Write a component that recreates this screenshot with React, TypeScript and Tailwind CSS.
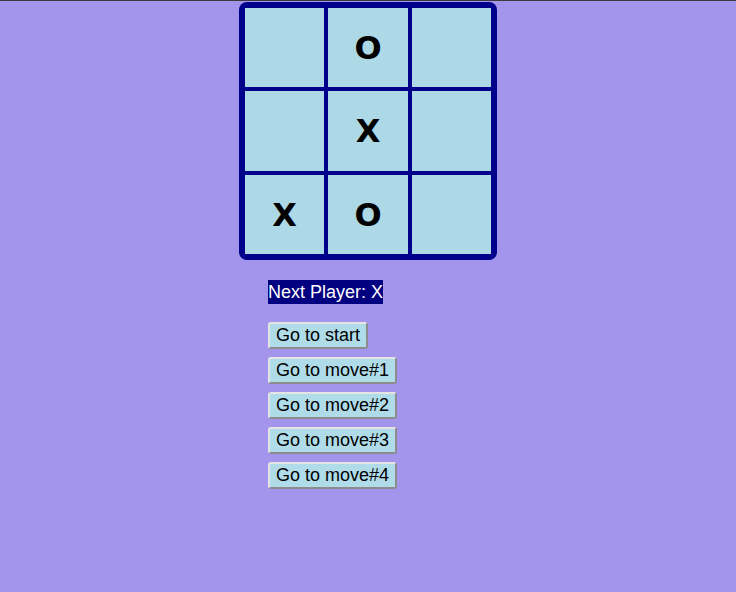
import React from "react";

const cells = ["", "O", "", "", "X", "", "X", "O", ""];
const moves = ["Go to start", "Go to move#1", "Go to move#2", "Go to move#3", "Go to move#4"];

export default function App() {
  return (
    <div
      className="min-h-[592px] w-full bg-[#a395eb] border-t border-[#3a3a3a]"
      style={{ fontFamily: '"Liberation Sans", Arial, sans-serif' }}
    >
      <div className="w-[258px] mx-auto pt-[1px]">
        <div className="grid grid-cols-[79px_80px_79px] grid-rows-[79px_80px_79px] gap-[4px] bg-[#00008b] p-[6px] rounded-[8px] w-[258px] h-[258px]">
          {cells.map((c, i) => (
            <div
              key={i}
              className="bg-[#add8e6] flex items-center justify-center text-[32px] font-bold text-black font-['DejaVu_Sans',sans-serif]"
            >
              {c}
            </div>
          ))}
        </div>
        <div className="pl-[29px] pt-[20px]">
          <div className="inline-block bg-[#000080] text-white text-[18px] leading-[24px]">
            Next Player: X
          </div>
          <div className="flex flex-col items-start gap-[8px] mt-[17px]">
            {moves.map((m) => (
              <button
                key={m}
                className="bg-[#b0dcea] text-black text-[18px] leading-[21px] px-[6px] py-[1px] border-2 border-solid border-t-[#e4e4e4] border-l-[#e4e4e4] border-r-[#8c8c8c] border-b-[#8c8c8c] rounded-[3px]"
              >
                {m}
              </button>
            ))}
          </div>
        </div>
      </div>
    </div>
  );
}
